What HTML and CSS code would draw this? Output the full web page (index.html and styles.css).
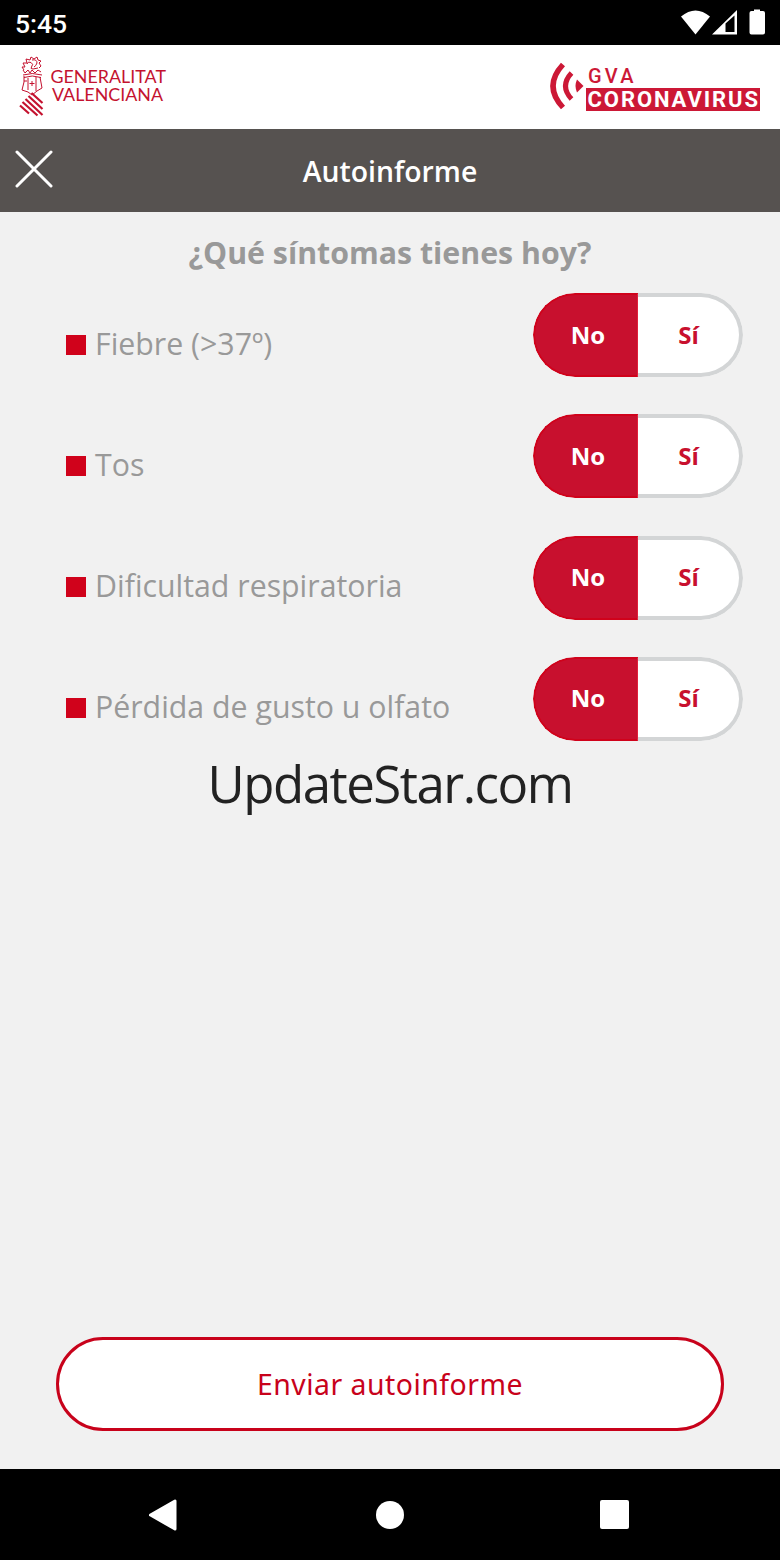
FILE: index.html
```html
<!DOCTYPE html>
<html lang="es">
<head>
  <meta charset="UTF-8">
  <meta name="viewport" content="width=device-width, initial-scale=1.0">
  <title>Autoinforme</title>
  <link rel="stylesheet" href="styles.css">
</head>
<body>
  <div class="status-bar">
    <span class="clock">5:45</span>
    <svg class="status-icons" width="90" height="30" viewBox="0 0 90 30" fill="#fff">
      <path d="M1 8.500Q15.500 -3.500 30 8.500L15.500 26.500Z"/>
      <path fill-rule="evenodd" d="M32 26.500L57 2V26.500ZM45.500 15.500V24H54.500V7.500Z"/>
      <path d="M74 3V1.500H80V3H83Q85 3 85 5V24.500Q85 26.500 83 26.500H71.500Q69.500 26.500 69.500 24.500V5Q69.500 3 71.500 3Z"/>
    </svg>
  </div>

  <header class="brand-bar">
    <svg class="logo-gva" width="150" height="62" viewBox="0 0 150 62">
      <g fill="none" stroke="#c4122f" stroke-width="1">
        <!-- crest -->
        <path d="M5 14L3 11L6 11L4 7L8 7L7 3L11 4L12 1L15 3L18 1L19 4L22 5L20 7L22 10L20 12"/>
        <path d="M8 8Q9 5 12 6.500Q15 8 12.500 11Q11 13 14 13L19 12M13 4Q18 3 18 7Q17 10 15 11"/>
        <path d="M4 14L6 17L9 14L11 17L13 14L16 17L19 14L22 16M4 19Q13 16 23 19M5 21.500Q13 18.500 22 21.500"/>
        <path d="M5 20V26L3 34L9 36L13 39L18 35L23 32L21 21M9 22V34M17 21V35M5 25H8"/>
        <path d="M13 25V30M10.500 27.500H15.500"/>
      </g>
      <!-- striped shield -->
      <g fill="none" stroke="#c4122f" stroke-width="2.200">
        <path d="M12.500 37L23.500 47M9.500 40L23.500 53M6.500 43L23.500 59M3.500 46L18.500 59.500M1 49.500L10 57.500"/>
      </g>
      <g class="logo-gva-text">
        <text x="31.500" y="27" textLength="115.500" lengthAdjust="spacingAndGlyphs">GENERALITAT</text>
        <text x="33" y="45" textLength="111" lengthAdjust="spacingAndGlyphs">VALENCIANA</text>
      </g>
    </svg>
    <svg class="logo-corona" width="214" height="56" viewBox="0 0 214 56">
      <g fill="none" stroke="#cc1836">
        <path stroke-width="5.500" d="M17 5.500Q-3 27 17 48.500"/>
        <path stroke-width="5" d="M25.500 14Q13.500 27 25.500 40"/>
      </g>
      <path fill="#cc1836" d="M31 20.500L37.500 27L31 33.500Q28 27 31 20.500Z"/>
      <rect x="40" y="29" width="174" height="23" fill="#cc1836"/>
      <text class="corona-small" x="42" y="24" textLength="45.500">GVA</text>
      <text class="corona-big" x="41.500" y="48" textLength="170.500">CORONAVIRUS</text>
    </svg>
  </header>

  <div class="title-bar">
    <svg class="close" width="38" height="38" viewBox="0 0 38 38" stroke="#fff" stroke-width="3" stroke-linecap="round">
      <path d="M2 2L36 36M36 2L2 36"/>
    </svg>
    <h1>Autoinforme</h1>
  </div>

  <main>
    <h2>¿Qué síntomas tienes hoy?</h2>
    <ul class="symptoms">
      <li>
        <span class="symptom">Fiebre (&gt;37º)</span>
        <div class="toggle"><span class="no">No</span><span class="si">Sí</span></div>
      </li>
      <li>
        <span class="symptom">Tos</span>
        <div class="toggle"><span class="no">No</span><span class="si">Sí</span></div>
      </li>
      <li>
        <span class="symptom">Dificultad respiratoria</span>
        <div class="toggle"><span class="no">No</span><span class="si">Sí</span></div>
      </li>
      <li>
        <span class="symptom">Pérdida de gusto u olfato</span>
        <div class="toggle"><span class="no">No</span><span class="si">Sí</span></div>
      </li>
    </ul>
    <p class="watermark">UpdateStar.com</p>
    <button class="send">Enviar autoinforme</button>
  </main>

  <nav class="nav-bar">
    <svg width="30" height="34" viewBox="0 0 30 34" fill="#fff" stroke="#fff" stroke-width="3" stroke-linejoin="round">
      <path d="M2.500 17L27 3V31Z"/>
    </svg>
    <span class="home"></span>
    <span class="recent"></span>
  </nav>
</body>
</html>
```

FILE: styles.css
```css
* {
  box-sizing: border-box;
}
body {
  margin: 0;
  height: 1560px;
  display: flex;
  flex-direction: column;
  font-family: "Open Sans", "Noto Sans", sans-serif;
  background-color: #f1f1f1;
}
.status-bar {
  height: 45px;
  padding: 0 10px 0 15px;
  display: flex;
  justify-content: space-between;
  align-items: center;
  background-color: #000;
  color: #fff;
}
.clock {
  font-family: Roboto, sans-serif;
  font-size: 26.5px;
  font-weight: 500;
  padding-top: 2px;
}
.brand-bar {
  height: 84px;
  padding: 0 20px 0 19px;
  display: flex;
  justify-content: space-between;
  align-items: center;
  background-color: #fff;
}
.logo-gva-text {
  font-family: Lato, sans-serif;
  font-size: 17px;
  fill: #c4122f;
}
.corona-small,
.corona-big {
  font-family: Roboto, sans-serif;
}
.corona-small {
  font-size: 20px;
  font-weight: 500;
  fill: #cc1836;
}
.corona-big {
  font-size: 22px;
  font-weight: 700;
  fill: #fff;
}
.title-bar {
  height: 83px;
  padding: 0 15px;
  display: grid;
  grid-template-columns: 38px 1fr 38px;
  align-items: center;
  background-color: #565250;
}
.close {
  margin-bottom: 4px;
}
h1 {
  margin: 0;
  color: #fff;
  font-size: 28.4px;
  font-weight: 600;
  text-align: center;
}
main {
  flex: 1;
  display: flex;
  flex-direction: column;
}
h2 {
  margin: 20px 0 19px;
  color: #999;
  font-size: 30.3px;
  line-height: 42px;
  font-weight: 700;
  text-align: center;
}
.symptoms {
  margin: 0;
  padding: 0 37px 0 66px;
  list-style: none;
  display: flex;
  flex-direction: column;
  gap: 37.300px;
}
.symptoms li {
  height: 84px;
  display: flex;
  justify-content: space-between;
  align-items: center;
}
.symptom {
  display: flex;
  align-items: center;
  gap: 9px;
  padding-top: 16px;
  color: #999;
  font-size: 30.3px;
  white-space: nowrap;
}
.symptom::before {
  content: "";
  width: 20px;
  height: 20px;
  margin-top: 3px;
  background-color: #d0021b;
}
.toggle {
  width: 210px;
  height: 84px;
  display: flex;
  border-radius: 42px;
  overflow: hidden;
  font-size: 24px;
  font-weight: 700;
}
.toggle span {
  display: flex;
  justify-content: center;
  align-items: center;
  padding-bottom: 2px;
}
.no {
  width: 105px;
  background-color: #c8102e;
  color: #fff;
  border: 2px solid #d0021b;
  border-right: 1px solid #e0203b;
  border-radius: 42px 0 0 42px;
  padding-left: 4px;
}
.si {
  width: 105px;
  background-color: #fff;
  color: #c8102e;
  border: 4px solid #d3d5d6;
  border-left: 0;
  border-radius: 0 42px 42px 0;
}
.watermark {
  margin: 7px 0 0;
  color: #222;
  font-size: 51px;
  line-height: 70px;
  letter-spacing: -1.5px;
  text-align: center;
}
.send {
  width: 668px;
  height: 94px;
  margin: auto auto 38px;
  background-color: #fff;
  border: 3px solid #c8021b;
  border-radius: 47px;
  color: #c8021b;
  font-family: "Noto Sans", sans-serif;
  font-size: 28.4px;
  letter-spacing: 0.5px;
}
.nav-bar {
  height: 91px;
  padding: 0 151px 0 148px;
  display: flex;
  justify-content: space-between;
  align-items: center;
  background-color: #000;
}
.home {
  width: 28px;
  height: 28px;
  margin-left: 2px;
  border-radius: 50%;
  background-color: #fff;
}
.recent {
  width: 29px;
  height: 29px;
  border-radius: 2px;
  background-color: #fff;
}
```
